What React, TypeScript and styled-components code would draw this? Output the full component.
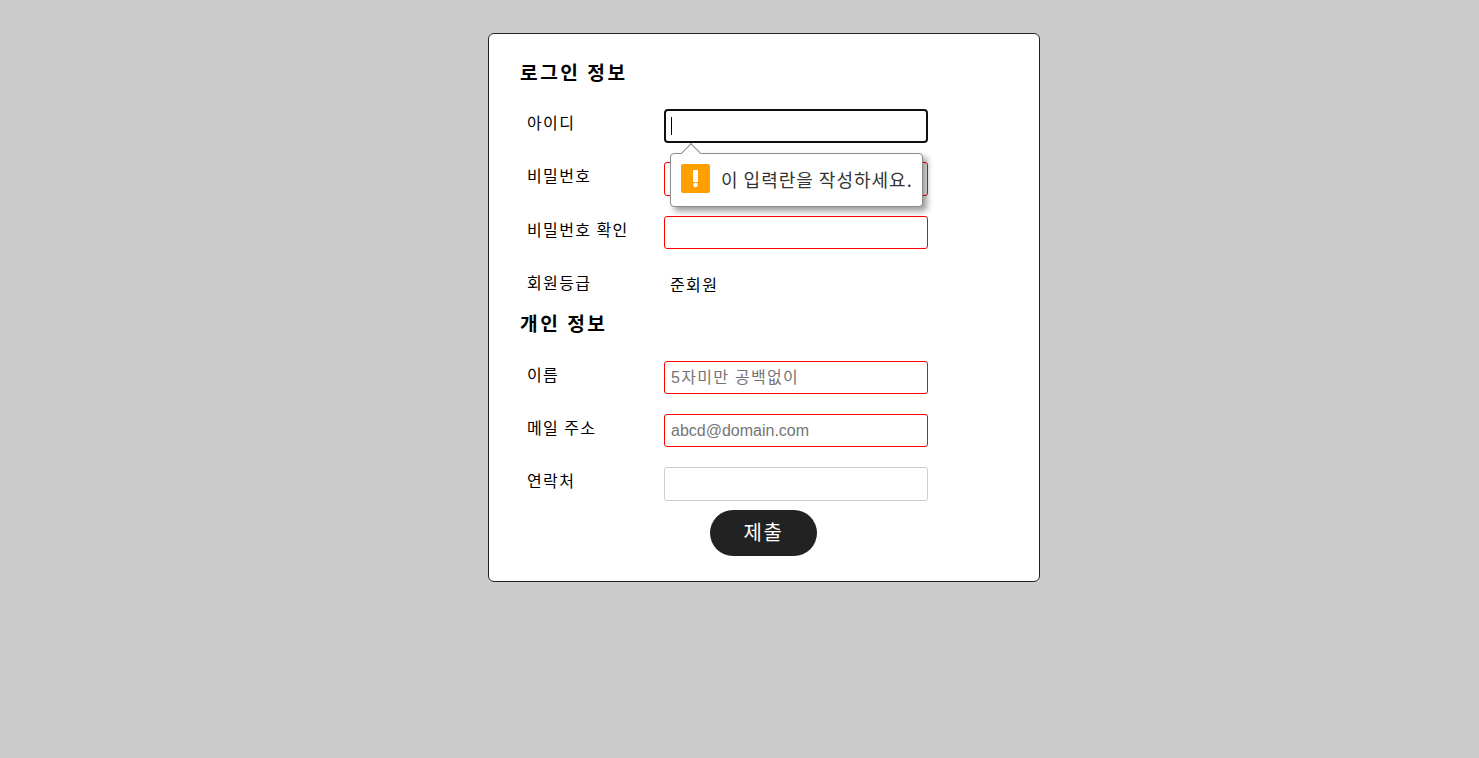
import React from "react";
import styled, { createGlobalStyle } from "styled-components";

const Global = createGlobalStyle`
  html, body { margin: 0; padding: 0; height: 100%; background: #ccc; }
  body { font-family: "Liberation Sans", "Noto Sans CJK KR", sans-serif; color: #000; }
  #root { min-height: 100%; }
`;

const Page = styled.div`
  padding: 33px 0 0 488px;
  height: 758px;
  box-sizing: border-box;
  overflow: hidden;
`;

const Card = styled.form`
  width: 552px;
  height: 549px;
  box-sizing: border-box;
  background: #fff;
  border: 1px solid #222;
  border-radius: 6px;
  padding: 24px 31px 0;
  display: flex;
  flex-direction: column;
`;

const Heading = styled.h2<{ $mt?: number; $h?: number }>`
  margin: ${(p) => p.$mt ?? 0}px 0 0;
  height: ${(p) => p.$h ?? 29}px;
  line-height: 28px;
  font-size: 19.2px;
  font-weight: 700;
  letter-spacing: 2.5px;
  font-family: "Noto Sans CJK KR", sans-serif;
`;

const Rows = styled.div<{ $gap?: number }>`
  margin-top: 22px;
  display: flex;
  flex-direction: column;
  gap: ${(p) => p.$gap ?? 20}px;
`;

const Row = styled.div`
  position: relative;
  display: grid;
  grid-template-columns: 144px 264px;
  height: 33.33px;
`;

const Label = styled.label`
  padding-left: 7px;
  font-size: 16px;
  line-height: 27.6px;
  letter-spacing: 1.4px;
  font-family: "Noto Sans CJK KR", sans-serif;
`;

const Value = styled.span`
  padding-left: 6px;
  font-size: 16px;
  line-height: 31px;
  letter-spacing: 1.4px;
  font-family: "Noto Sans CJK KR", sans-serif;
`;

const Field = styled.input<{ $state?: "error" | "focus"; $spaced?: boolean }>`
  width: 264px;
  height: ${(p) => (p.$state === "focus" ? "34px" : "33.33px")};
  box-sizing: border-box;
  padding: 1px 6px;
  background: #fff;
  border-style: solid;
  border-radius: ${(p) => (p.$state === "focus" ? 4 : 3)}px;
  border-width: ${(p) => (p.$state === "focus" ? 2 : 1)}px;
  border-color: ${(p) => (p.$state === "focus" ? "#101010" : p.$state === "error" ? "#f00" : "#ccc")};
  font-size: 16px;
  letter-spacing: ${(p) => (p.$spaced ? "1.3px" : "0")};
  font-family: "Liberation Sans", "Noto Sans CJK KR", sans-serif;
  outline: none;
  &::placeholder { color: #757575; opacity: 1; }
`;

const Caret = styled.span`
  position: absolute;
  left: 151px;
  top: 8px;
  width: 1px;
  height: 18px;
  background: #000;
`;

const Bubble = styled.div`
  position: absolute;
  left: 150px;
  top: 44px;
  z-index: 2;
  width: 253px;
  height: 54px;
  box-sizing: border-box;
  display: flex;
  align-items: center;
  gap: 11px;
  padding: 0 0 3px 10px;
  background: #fff;
  border: 1px solid #8c8c8c;
  border-radius: 4px;
  box-shadow: 4px 4px 6px rgba(0, 0, 0, 0.4);
  font-size: 18px;
  letter-spacing: 1px;
  color: #333;
  white-space: nowrap;
  font-family: "Noto Sans CJK KR", sans-serif;
  &::before {
    content: "";
    position: absolute;
    left: 13px;
    top: -8px;
    width: 14px;
    height: 14px;
    background: #fff;
    border-left: 1px solid #8c8c8c;
    border-top: 1px solid #8c8c8c;
    transform: rotate(45deg);
    box-sizing: border-box;
  }
`;

const WarnIcon = styled.svg`
  flex: none;
  width: 29px;
  height: 29px;
`;

const SubmitRow = styled.div`
  margin-top: 9.6px;
  display: flex;
  justify-content: center;
  padding-right: 1px;
`;

const Submit = styled.button`
  width: 107px;
  height: 46px;
  border: none;
  border-radius: 23px;
  background: #222;
  color: #fff;
  font-size: 20px;
  line-height: 28px;
  padding-bottom: 3px;
  letter-spacing: 1.5px;
  font-family: "Noto Sans CJK KR", sans-serif;
`;

export default function App() {
  return (
    <Page>
      <Global />
      <Card onSubmit={(e) => e.preventDefault()}>
        <Heading>로그인 정보</Heading>
        <Rows>
          <Row>
            <Label>아이디</Label>
            <Field $state="focus" />
            <Caret />
            <Bubble>
              <WarnIcon viewBox="0 0 29 29">
                <rect width="29" height="29" rx="2" fill="#ffa000" />
                <rect x="12" y="6" width="5" height="12" rx="0.5" fill="#fff" />
                <circle cx="14.5" cy="21" r="2.2" fill="#fff" />
              </WarnIcon>
              이 입력란을 작성하세요.
            </Bubble>
          </Row>
          <Row>
            <Label>비밀번호</Label>
            <Field type="password" $state="error" />
          </Row>
          <Row>
            <Label>비밀번호 확인</Label>
            <Field type="password" $state="error" />
          </Row>
          <Row>
            <Label>회원등급</Label>
            <Value>준회원</Value>
          </Row>
        </Rows>
        <Heading $mt={6.67} $h={30}>개인 정보</Heading>
        <Rows $gap={19.87}>
          <Row>
            <Label>이름</Label>
            <Field $state="error" $spaced placeholder="5자미만 공백없이" />
          </Row>
          <Row>
            <Label>메일 주소</Label>
            <Field $state="error" placeholder="abcd@domain.com" />
          </Row>
          <Row>
            <Label>연락처</Label>
            <Field />
          </Row>
        </Rows>
        <SubmitRow>
          <Submit type="submit">제출</Submit>
        </SubmitRow>
      </Card>
    </Page>
  );
}
